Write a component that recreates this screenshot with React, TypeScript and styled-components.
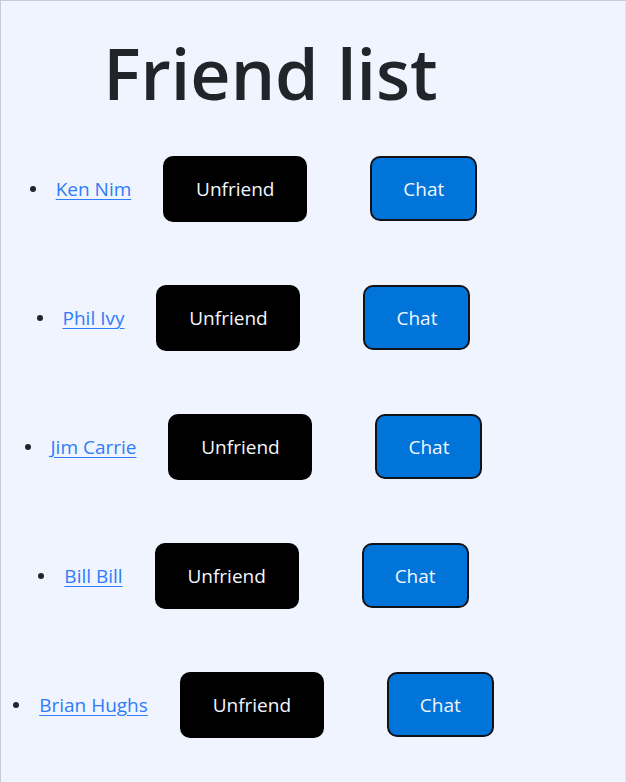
import React from "react";
import styled, { createGlobalStyle } from "styled-components";

const GlobalStyle = createGlobalStyle`
  html, body {
    margin: 0;
    padding: 0;
    background: #f0f4ff;
  }
  body {
    font-family: "Open Sans", "Noto Sans", sans-serif;
  }
`;

const Page = styled.div`
  box-sizing: border-box;
  min-height: 100vh;
  background: #f0f4ff;
  border-top: 1px solid #c6cad6;
  border-left: 1px solid #c6cad6;
  border-right: 1px solid #e2e6f2;
`;

const Column = styled.main`
  width: 531px;
  display: flex;
  flex-direction: column;
  align-items: center;
`;

const Title = styled.h1`
  margin: 30px 0 9px;
  padding-left: 8px;
  font-family: "Open Sans", "Noto Sans", sans-serif;
  font-size: 70px;
  line-height: 84px;
  font-weight: 600;
  color: #212529;
`;

const List = styled.ul`
  list-style: none;
  margin: 0;
  padding: 0;
  align-self: stretch;
`;

const Row = styled.li`
  height: 129px;
  display: flex;
  align-items: center;
  justify-content: center;
`;

const Bullet = styled.span`
  width: 6px;
  height: 6px;
  border-radius: 50%;
  background: #212529;
  margin-left: -26px;
  margin-right: 20px;
  flex: none;
`;

const FriendLink = styled.a`
  font-size: 19px;
  color: #2f7cf8;
  text-decoration: underline;
  text-underline-offset: 3px;
  text-decoration-thickness: 1px;
  white-space: nowrap;
`;

const ActionButton = styled.button<{ $variant: "unfriend" | "chat" }>`
  box-sizing: border-box;
  flex: none;
  height: ${(p) => (p.$variant === "unfriend" ? "66px" : "65px")};
  width: ${(p) => (p.$variant === "unfriend" ? "144px" : "107px")};
  margin-left: ${(p) => (p.$variant === "unfriend" ? "32px" : "63px")};
  border-radius: 10px;
  border: 2px solid ${(p) => (p.$variant === "unfriend" ? "#000" : "#111318")};
  background: ${(p) => (p.$variant === "unfriend" ? "#000" : "#0074d9")};
  color: #f4f6ff;
  font-family: "Open Sans", "Noto Sans", sans-serif;
  font-size: 19px;
  padding: 0;
  cursor: pointer;
`;

const friends = ["Ken Nim", "Phil Ivy", "Jim Carrie", "Bill Bill", "Brian Hughs"];

export default function App() {
  return (
    <>
      <GlobalStyle />
      <Page>
        <Column>
          <Title>Friend list</Title>
          <List>
            {friends.map((name) => (
              <Row key={name}>
                <Bullet />
                <FriendLink href="#">{name}</FriendLink>
                <ActionButton $variant="unfriend">Unfriend</ActionButton>
                <ActionButton $variant="chat">Chat</ActionButton>
              </Row>
            ))}
          </List>
        </Column>
      </Page>
    </>
  );
}
